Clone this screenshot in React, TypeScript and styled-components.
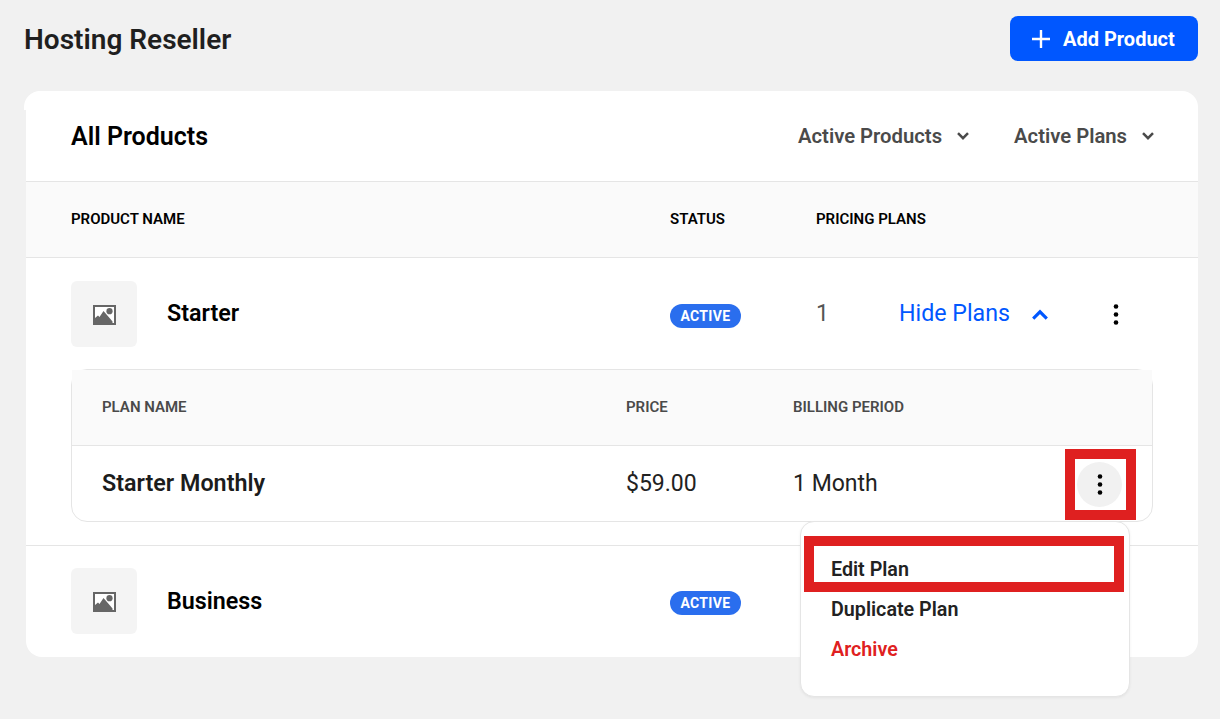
import React from "react";
import styled, { createGlobalStyle } from "styled-components";

const GlobalStyle = createGlobalStyle`
  html, body {
    margin: 0;
    padding: 0;
    background: #f1f1f1;
  }
  body {
    font-family: Roboto, "Liberation Sans", sans-serif;
  }
`;

const ChevronDown = () => (
  <svg width="12" height="8" viewBox="0 0 12 8" fill="none">
    <path d="M1 1.2 L6 6.2 L11 1.2" stroke="currentColor" strokeWidth="2.5" />
  </svg>
);

const ChevronUp = () => (
  <svg width="16" height="11" viewBox="0 0 16 11" fill="none">
    <path d="M1.2 9.6 L8 2.8 L14.8 9.6" stroke="currentColor" strokeWidth="3.1" />
  </svg>
);

const PlusIcon = () => (
  <svg width="18" height="18" viewBox="0 0 18 18" fill="none">
    <path d="M9 0.5 V17.5 M0.5 9 H17.5" stroke="#fff" strokeWidth="2.4" strokeLinecap="round" />
  </svg>
);

const Kebab = () => (
  <svg width="6" height="21" viewBox="0 0 6 21" fill="#000">
    <circle cx="3" cy="2.5" r="2.3" />
    <circle cx="3" cy="10.5" r="2.3" />
    <circle cx="3" cy="18.5" r="2.3" />
  </svg>
);

const ImageSvg = styled.svg`
  margin-top: 1px;
`;

const ImageIcon = () => (
  <ImageSvg width="23" height="20" viewBox="0 0 23 20">
    <rect width="23" height="20" fill="#666" />
    <rect x="2" y="2" width="19" height="16" fill="#fff" />
    <path d="M2 18 V13 L5 10.5 L6.5 12 L10.5 6 L17 13.5 L19.5 16.5 V18 Z" fill="#666" />
    <circle cx="16.5" cy="6.2" r="3.1" fill="#666" />
  </ImageSvg>
);

const Page = styled.div`
  width: 1220px;
  height: 719px;
  box-sizing: border-box;
  padding: 16px 22px 0 26px;
  overflow: hidden;
`;

const TopBar = styled.div`
  display: flex;
  justify-content: space-between;
  align-items: center;
  height: 45px;
  margin-left: -2px;
  margin-bottom: 30px;
`;

const PageTitle = styled.h1`
  margin: 0;
  padding-top: 2px;
  font-size: 28px;
  font-weight: 600;
  color: #1f1f1f;
`;

const AddButton = styled.button`
  display: flex;
  align-items: center;
  gap: 13px;
  width: 188px;
  height: 45px;
  padding: 0 0 0 22px;
  border: 0;
  border-radius: 8px;
  background: #0057ff;
  color: #fff;
  font-family: inherit;
  font-size: 20px;
  font-weight: 700;
`;

const Card = styled.div`
  position: relative;
  background: #fff;
  border-radius: 16px;
  height: 566px;

  &::before {
    content: "";
    position: absolute;
    left: -2px;
    top: 0;
    width: 20px;
    height: 19px;
    background: #fff;
    border-top-left-radius: 16px;
  }
`;

const CardHead = styled.div`
  position: relative;
  display: flex;
  align-items: center;
  justify-content: space-between;
  height: 90px;
  padding: 0 44px 0 45px;
  border-bottom: 1px solid #e5e5e5;
`;

const CardTitle = styled.h2`
  margin: 0;
  font-size: 25px;
  font-weight: 600;
  color: #000;
`;

const Filters = styled.div`
  display: flex;
  gap: 45px;
`;

const Filter = styled.div`
  display: flex;
  align-items: center;
  gap: 15px;
  font-size: 20.25px;
  font-weight: 600;
  color: #4a4a4a;
`;

const productColumns = "599px 146px 83px 1fr";

const TableHead = styled.div`
  display: grid;
  grid-template-columns: ${productColumns};
  align-items: center;
  height: 73px;
  padding: 0 0 2px 45px;
  background: #fafafa;
  border-bottom: 1px solid #e5e5e5;
  font-size: 15px;
  font-weight: 600;
  color: #000;
  white-space: nowrap;
`;

const ProductRow = styled.div<{ $first?: boolean }>`
  display: grid;
  grid-template-columns: ${productColumns};
  align-items: center;
  padding: ${(p) => (p.$first ? "23px 45px 22px" : "22px 45px 23px")};
`;

const ProductName = styled.div`
  display: flex;
  align-items: center;
  gap: 30px;
  font-size: 23.3px;
  font-weight: 600;
  color: #000;
`;

const ProductLabel = styled.span<{ $lift?: boolean }>`
  padding-bottom: ${(p) => (p.$lift ? "2px" : "0")};
`;

const Thumb = styled.div`
  display: flex;
  align-items: center;
  justify-content: center;
  width: 66px;
  height: 66px;
  border-radius: 6px;
  background: #f4f4f4;
`;

const Badge = styled.span`
  justify-self: start;
  margin-top: 4px;
  padding: 0 10.5px;
  height: 24px;
  line-height: 24px;
  border-radius: 12px;
  background: #2a6eee;
  color: #fff;
  font-size: 14px;
  font-weight: 700;
  letter-spacing: 0.3px;
`;

const PlanCount = styled.span`
  padding-bottom: 2px;
  font-size: 23px;
  color: #555;
`;

const PlanActions = styled.div`
  display: flex;
  align-items: center;
`;

const HidePlans = styled.div`
  display: flex;
  align-items: center;
  gap: 22px;
  width: 214px;
  font-size: 23.2px;
  color: #0057ff;
`;

const HideLabel = styled.span`
  padding-bottom: 2px;
`;

const PlansBox = styled.div`
  position: relative;
  margin: 0 45px;
  border: 1px solid #e5e5e5;
  border-radius: 16px;
`;

const planColumns = "524px 167px 1fr auto";

const PlansHead = styled.div`
  display: grid;
  grid-template-columns: ${planColumns};
  align-items: center;
  height: 73px;
  padding: 0 0 2px 30px;
  background: #fafafa;
  border-bottom: 1px solid #e5e5e5;
  font-size: 15px;
  font-weight: 600;
  color: #4a4a4a;
`;

const PlanRow = styled.div`
  display: grid;
  grid-template-columns: ${planColumns};
  align-items: center;
  height: 75px;
  padding: 0 16px 0 30px;
  font-size: 23px;
  color: #222;
`;

const PlanName = styled.span`
  padding-bottom: 2px;
  font-size: 23.3px;
  font-weight: 600;
  color: #1c1c1c;
`;

const KebabHighlight = styled.div`
  display: flex;
  align-items: center;
  justify-content: center;
  box-sizing: border-box;
  width: 71px;
  height: 71px;
  margin-top: 2px;
  padding-right: 2px;
  border: 10px solid #df2020;
  background: #fff;
`;

const KebabButton = styled.div`
  display: flex;
  align-items: center;
  justify-content: center;
  flex-shrink: 0;
  width: 45px;
  height: 45px;
  border-radius: 50%;
  background: #f1f1f1;
`;

const Divider = styled.div`
  height: 1px;
  margin-top: 23px;
  background: #e5e5e5;
`;

const Menu = styled.div`
  position: absolute;
  top: 151px;
  left: 728px;
  box-sizing: border-box;
  width: 330px;
  height: 176px;
  padding-top: 27px;
  background: #fff;
  border: 1px solid #e5e5e5;
  border-radius: 14px;
  box-shadow: 0 1px 3px rgba(0, 0, 0, 0.06);
`;

const MenuItem = styled.div<{ $danger?: boolean }>`
  position: relative;
  display: flex;
  align-items: center;
  height: 40px;
  padding-left: 30px;
  font-size: 19.7px;
  font-weight: 600;
  color: ${(p) => (p.$danger ? "#df2020" : "#222")};
`;

const MenuHighlight = styled.div`
  position: absolute;
  left: 3px;
  right: 5px;
  top: -13px;
  bottom: -3px;
  border: 10px solid #df2020;
`;

export default function App() {
  return (
    <Page>
      <GlobalStyle />
      <TopBar>
        <PageTitle>Hosting Reseller</PageTitle>
        <AddButton>
          <PlusIcon />
          Add Product
        </AddButton>
      </TopBar>
      <Card>
        <CardHead>
          <CardTitle>All Products</CardTitle>
          <Filters>
            <Filter>
              Active Products <ChevronDown />
            </Filter>
            <Filter>
              Active Plans <ChevronDown />
            </Filter>
          </Filters>
        </CardHead>
        <TableHead>
          <span>PRODUCT NAME</span>
          <span>STATUS</span>
          <span>PRICING PLANS</span>
        </TableHead>
        <ProductRow $first>
          <ProductName>
            <Thumb>
              <ImageIcon />
            </Thumb>
            <ProductLabel $lift>Starter</ProductLabel>
          </ProductName>
          <Badge>ACTIVE</Badge>
          <PlanCount>1</PlanCount>
          <PlanActions>
            <HidePlans>
              <HideLabel>Hide Plans</HideLabel>
              <ChevronUp />
            </HidePlans>
            <Kebab />
          </PlanActions>
        </ProductRow>
        <PlansBox>
          <PlansHead>
            <span>PLAN NAME</span>
            <span>PRICE</span>
            <span>BILLING PERIOD</span>
          </PlansHead>
          <PlanRow>
            <PlanName>Starter Monthly</PlanName>
            <span>$59.00</span>
            <span>1 Month</span>
            <KebabHighlight>
              <KebabButton>
                <Kebab />
              </KebabButton>
            </KebabHighlight>
          </PlanRow>
          <Menu>
            <MenuItem>
              Edit Plan
              <MenuHighlight />
            </MenuItem>
            <MenuItem>Duplicate Plan</MenuItem>
            <MenuItem $danger>Archive</MenuItem>
          </Menu>
        </PlansBox>
        <Divider />
        <ProductRow>
          <ProductName>
            <Thumb>
              <ImageIcon />
            </Thumb>
            <ProductLabel>Business</ProductLabel>
          </ProductName>
          <Badge>ACTIVE</Badge>
        </ProductRow>
      </Card>
    </Page>
  );
}
